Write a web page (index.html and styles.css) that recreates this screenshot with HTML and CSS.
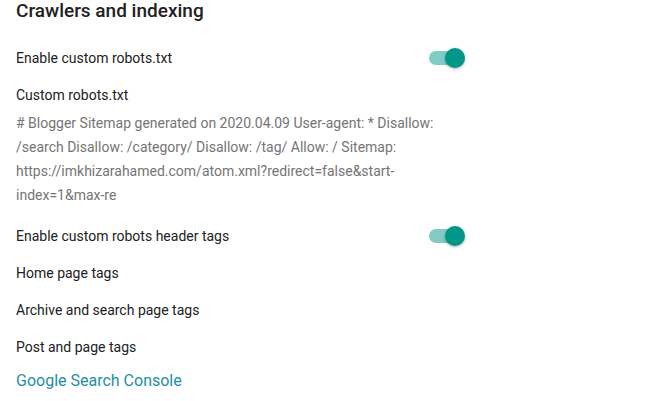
FILE: index.html
```html
<!DOCTYPE html>
<html lang="en">
<head>
  <meta charset="UTF-8">
  <meta name="viewport" content="width=device-width, initial-scale=1.0">
  <title>Crawlers and indexing</title>
  <link rel="stylesheet" href="styles.css">
</head>
<body>
  <h2>Crawlers and indexing</h2>

  <!-- robots.txt -->
  <div class="row">
    <span>Enable custom robots.txt</span>
    <span class="switch on"><span class="track"></span><span class="thumb"></span></span>
  </div>
  <div class="row">
    <span>Custom robots.txt</span>
  </div>
  <p class="value"># Blogger Sitemap generated on 2020.04.09 User-agent: * Disallow: /search Disallow: /category/ Disallow: /tag/ Allow: / Sitemap: https://imkhizarahamed.com/atom.xml?redirect=false&amp;start-index=1&amp;max-re</p>

  <!-- header tags -->
  <div class="row">
    <span>Enable custom robots header tags</span>
    <span class="switch on"><span class="track"></span><span class="thumb"></span></span>
  </div>
  <div class="row"><span>Home page tags</span></div>
  <div class="row"><span>Archive and search page tags</span></div>
  <div class="row"><span>Post and page tags</span></div>

  <a class="link" href="#">Google Search Console</a>
</body>
</html>
```

FILE: styles.css
```css
body {
  font-family: Roboto, "Noto Sans", sans-serif;
  background-color: #fff;
  margin: 0;
  padding: 0 16px;
  color: #212121;
}

h2 {
  margin: 0;
  font-size: 19px;
  font-weight: 500;
  line-height: 22px;
  color: #212121;
}

.row {
  width: 450px;
  height: 37px;
  display: flex;
  align-items: center;
  justify-content: space-between;
  font-size: 14px;
}

h2 + .row {
  margin-top: 17px;
}

.value {
  width: 435px;
  margin: -2px 0 10px;
  font-size: 14px;
  line-height: 24px;
  color: #757575;
}

.switch {
  position: relative;
  width: 36px;
  height: 20px;
  margin-right: 1px;
}

.switch .track {
  position: absolute;
  left: 0;
  top: 3px;
  width: 34px;
  height: 14px;
  border-radius: 7px;
  background-color: #80cbc4;
}

.switch .thumb {
  position: absolute;
  right: 0;
  top: 0;
  width: 20px;
  height: 20px;
  border-radius: 50%;
  background-color: #009688;
  box-shadow: 0 1px 3px rgba(0, 0, 0, 0.3);
}

.link {
  display: block;
  margin-top: 6px;
  font-size: 16px;
  color: #1e8ea5;
  text-decoration: none;
}
```
